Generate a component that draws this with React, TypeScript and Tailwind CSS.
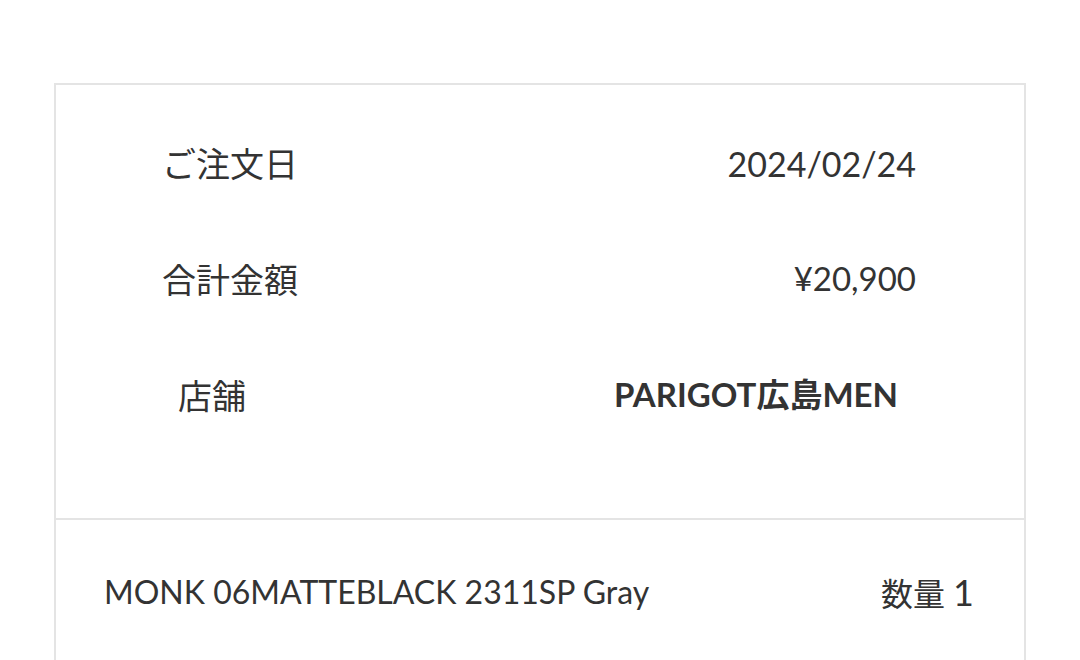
const FONT = { fontFamily: '"Lato", "Noto Sans CJK JP", sans-serif' };

const rows = [
  { label: "ご注文日", value: "2024/02/24", labelCls: "-ml-[2px]", valueCls: "" },
  { label: "合計金額", value: "¥20,900", labelCls: "-ml-[2px]", valueCls: "text-[33px]" },
  { label: "店舗", value: "PARIGOT広島MEN", labelCls: "pl-[14px]", valueCls: "pr-[18px] font-bold text-[33px]" },
];

export default function App() {
  return (
    <div className="min-h-[660px] bg-white text-[#333333] overflow-hidden" style={FONT}>
      <div className="pt-[83px] pl-[54px] w-[1026px]">
        <div className="border-2 border-[#e4e4e4] h-[620px]">
          <div className="pt-[20px] pb-[65px] px-[108px]">
            {rows.map((r) => (
              <div key={r.label} className="h-[116px] flex items-center justify-between text-[34px]">
                <span className={r.labelCls}>{r.label}</span>
                <span className={r.valueCls}>{r.value}</span>
              </div>
            ))}
          </div>
          <div className="border-t-2 border-[#e4e4e4] h-[146px] flex items-center justify-between pl-[48px] pr-[50px] text-[32px]">
            <span>MONK 06MATTEBLACK 2311SP Gray</span>
            <span>
              数量 <span className="text-[36px]">1</span>
            </span>
          </div>
        </div>
      </div>
    </div>
  );
}
